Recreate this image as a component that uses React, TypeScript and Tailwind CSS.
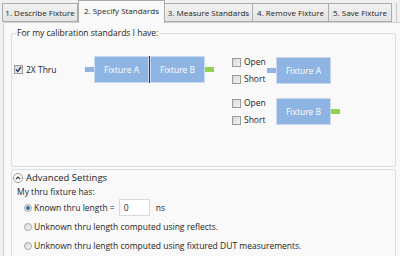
import { FC } from "react";

const tabs = [
  { label: "1. Describe Fixture", w: "w-[76px]" },
  { label: "2. Specify Standards", w: "w-[87px]", active: true },
  { label: "3. Measure Standards", w: "w-[88px]" },
  { label: "4. Remove Fixture", w: "w-[76px]" },
  { label: "5. Save Fixture", w: "w-[63px]" },
];

const Check: FC<{ checked?: boolean }> = ({ checked }) => (
  <span className="flex h-[9px] w-[9px] shrink-0 items-center justify-center border border-[#9a9a9a] bg-linear-to-br from-[#d6d6d6] to-[#f4f4f4]">
    {checked && (
      <svg width="7" height="7" viewBox="0 0 7 7">
        <path d="M1 3.5 L2.8 5.5 L6 1" fill="none" stroke="#2a3f5f" strokeWidth="1.4" />
      </svg>
    )}
  </span>
);

const Radio: FC<{ checked?: boolean }> = ({ checked }) => (
  <span className="flex h-[8px] w-[8px] shrink-0 items-center justify-center rounded-full border border-[#a8a8a8] bg-linear-to-br from-[#dadada] to-[#f6f6f6]">
    {checked && <span className="h-[4px] w-[4px] rounded-full bg-[#2f6fb4]" />}
  </span>
);

const Box: FC<{ label: string }> = ({ label }) => (
  <div className="flex h-[27px] w-[55px] items-center justify-center border border-[#c9daf0] bg-[#8db4e2] text-white">
    {label}
  </div>
);

const Stub: FC<{ green?: boolean }> = ({ green }) => (
  <div className={green ? "h-[5px] w-[9px] bg-[#92d050]" : "h-[5px] w-[9px] bg-[#8db4e2]"} />
);

const OpenShort: FC = () => (
  <div className="flex w-[35px] flex-col gap-[5px]">
    <label className="flex items-center gap-[3px]">
      <Check />
      Open
    </label>
    <label className="flex items-center gap-[3px]">
      <Check />
      Short
    </label>
  </div>
);

export default function App() {
  return (
    <div className="h-[256px] w-[400px] overflow-hidden bg-[#f0f0f0] font-['Open_Sans',sans-serif] text-[8.5px] leading-[12px] text-[#1e1e1e]">
      {/* tab strip */}
      <div className="flex h-[22px] items-end pl-[2px] text-[8px]">
        {tabs.map((t) =>
          t.active ? (
            <div
              key={t.label}
              className={`${t.w} relative z-10 -mb-px flex h-[23px] items-center justify-center border border-b-0 border-[#acacac] bg-[#f9f9f9] pb-[2px]`}
            >
              {t.label}
            </div>
          ) : (
            <div
              key={t.label}
              className={`${t.w} flex h-[19px] items-center justify-center border border-l-0 border-[#acacac] bg-linear-to-b from-[#f2f2f2] to-[#e3e3e3] first:border-l`}
            >
              {t.label}
            </div>
          ),
        )}
        <div className="ml-[4px] h-[19px] border-l border-[#c8c8c8]" />
      </div>

      {/* panel */}
      <div className="ml-[3px] h-[234px] border-t border-l border-[#d0d0d0] bg-[#f9f9f9] pr-[4px] pl-[7px]">
        <fieldset className="mt-[4px] h-[140px] rounded-[3px] border border-[#d5dfe5] pl-[1px]">
          <legend className="ml-[3px] px-[1px]">For my calibration standards I have:</legend>
          <div className="flex items-start pt-[17px]">
            <label className="flex h-[27px] w-[72px] items-center gap-[3px] pl-[1px]">
              <Check checked />
              2X Thru
            </label>
            <div className="flex items-center">
              <Stub />
              <Box label="Fixture A" />
              <div className="h-[27px] w-px bg-[#243a57]" />
              <Box label="Fixture B" />
              <Stub green />
            </div>
            <div className="ml-[18px] flex flex-col gap-[12px]">
              <div className="flex items-center">
                <OpenShort />
                <Stub />
                <Box label="Fixture A" />
              </div>
              <div className="flex items-center">
                <OpenShort />
                <div className="w-[9px]" />
                <Box label="Fixture B" />
                <Stub green />
              </div>
            </div>
          </div>
        </fieldset>

        {/* advanced */}
        <div className="mt-[2px] h-[100px] rounded-t-[3px] border border-[#d5dfe5] pl-[1px]">
          <div className="flex h-[15px] items-center gap-[3px]">
            <span className="flex h-[10px] w-[10px] items-center justify-center rounded-full border border-[#9a9a9a] bg-white">
              <svg width="6" height="4" viewBox="0 0 6 4">
                <path d="M0.8 3.2 L3 1 L5.2 3.2" fill="none" stroke="#333" strokeWidth="1.1" />
              </svg>
            </span>
            <span className="text-[9.5px]">Advanced Settings</span>
          </div>
          <div className="pl-[4px] pt-[1px]">My thru fixture has:</div>
          <div className="flex flex-col pl-[11px]">
            <div className="flex h-[19px] items-center gap-[2px]">
              <Radio checked />
              <span>Known thru length =</span>
              <span className="ml-[2px] flex h-[17px] w-[31px] items-center border border-[#d9d9d9] bg-white pl-[4px]">
                0
              </span>
              <span className="ml-[4px]">ns</span>
            </div>
            <div className="flex h-[19px] items-center gap-[2px]">
              <Radio />
              <span>Unknown thru length computed using reflects.</span>
            </div>
            <div className="flex h-[19px] items-center gap-[2px]">
              <Radio />
              <span>Unknown thru length computed using fixtured DUT measurements.</span>
            </div>
          </div>
        </div>
      </div>
    </div>
  );
}
